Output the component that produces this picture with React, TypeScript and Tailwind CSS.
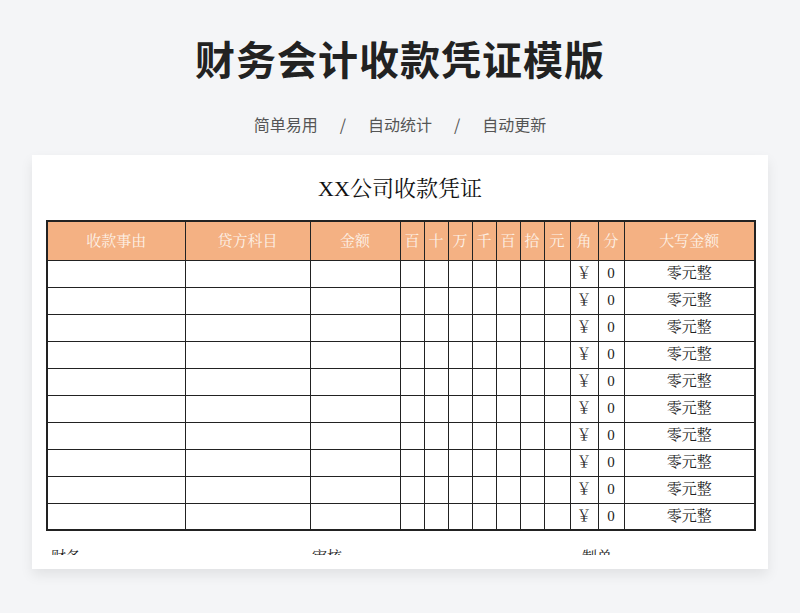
export default function App() {
  const cols = [138, 125, 90, 24, 24, 24, 24, 24, 24, 26, 28, 26, 131];
  const heads = ["收款事由", "贷方科目", "金额", "百", "十", "万", "千", "百", "拾", "元", "角", "分", "大写金额"];
  const serif = { fontFamily: '"Liberation Serif","Noto Serif CJK SC","Noto Sans CJK SC",serif' };
  return (
    <div className="w-[800px] h-[613px] bg-[#f4f5f7] overflow-hidden flex flex-col items-center" style={{ fontFamily: '"Noto Sans CJK SC",sans-serif' }}>
      <h1 className="mt-[31px] text-[40px] leading-[54px] font-bold text-[#222] tracking-[1px]">财务会计收款凭证模版</h1>
      <div className="mt-[27px] text-[16px] leading-[24px] text-[#555] flex gap-[22px]">
        <span>简单易用</span><span>/</span><span>自动统计</span><span>/</span><span>自动更新</span>
      </div>
      <div className="mt-[19px] w-[736px] h-[414px] bg-white shadow-[0_6px_12px_rgba(0,0,0,0.08)] overflow-hidden flex flex-col" style={serif}>
        <div className="h-[65px] flex items-center justify-center text-[22px] text-[#111] pt-[2px]">XX公司收款凭证</div>
        <table className="ml-[14px] border-collapse border-2 border-[#222] table-fixed" style={{ width: 708 }}>
          <colgroup>{cols.map((w, i) => <col key={i} style={{ width: w }} />)}</colgroup>
          <thead>
            <tr className="h-[39px] bg-[#f4b183]">
              {heads.map((h, i) => <th key={i} className="border border-[#222] font-normal text-[15px] text-[#fdf1e8] p-0">{h}</th>)}
            </tr>
          </thead>
          <tbody>
            {Array.from({ length: 10 }).map((_, r) => (
              <tr key={r} className="h-[27px]">
                {cols.map((_, i) => (
                  <td key={i} className="border border-[#222] text-center text-[15px] text-[#222] p-0">
                    {i === 10 ? "￥" : i === 11 ? "0" : i === 12 ? "零元整" : ""}
                  </td>
                ))}
              </tr>
            ))}
          </tbody>
        </table>
        <div className="relative h-[24px] overflow-hidden text-[15px] text-[#222] shrink-0">
          <span className="absolute left-[19px] top-[15px]">财务</span>
          <span className="absolute left-[280px] top-[15px]">审核</span>
          <span className="absolute left-[550px] top-[15px]">制单</span>
        </div>
      </div>
    </div>
  );
}
